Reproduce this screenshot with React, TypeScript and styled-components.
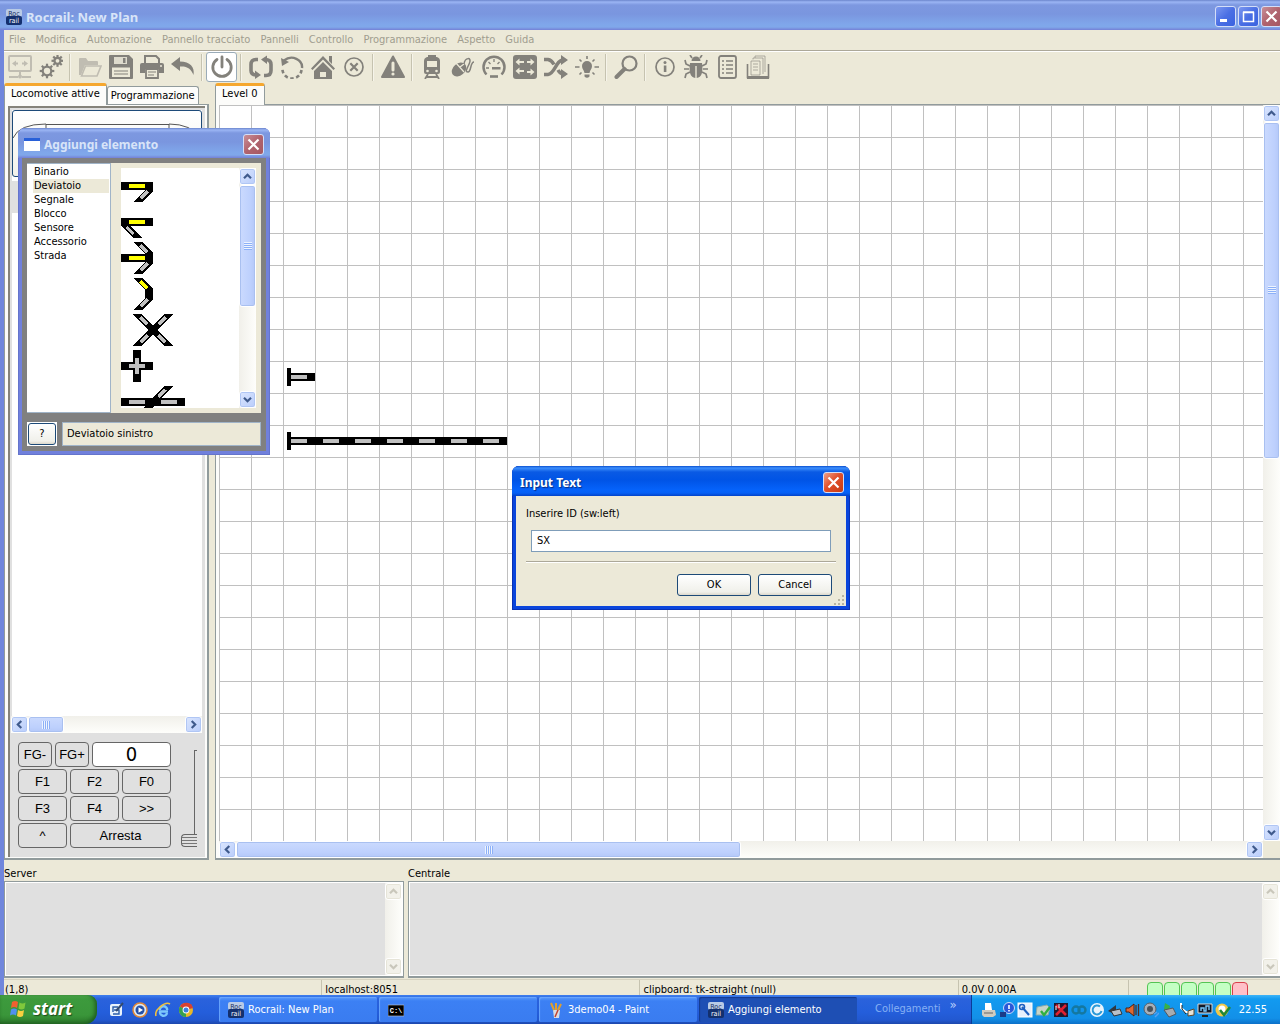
import React, { useState } from "react";
import styled, { createGlobalStyle, css } from "styled-components";

const face = "#ece9d8";
const ui = `"DejaVu Sans Condensed", "Open Sans", sans-serif`;
const caption = `"Noto Sans", "Open Sans", sans-serif`;
const ink = "#83817b";

const Global = createGlobalStyle`
  * { box-sizing: border-box; }
  body { margin: 0; background: ${face}; font: 11px/14px ${ui}; color: #000; }
  button, input, textarea { font: inherit; color: inherit; margin: 0; padding: 0; border-radius: 0; outline: none; }
  button { cursor: default; }
  ul { list-style: none; margin: 0; padding: 0; }
  svg { display: block; flex: none; }
`;

const Screen = styled.div`
  position: relative;
  display: flex;
  flex-direction: column;
  min-height: 100vh;
  overflow: hidden;
`;

/* ---------- window chrome ---------- */
const MainWindow = styled.main`
  flex: 1;
  display: flex;
  flex-direction: column;
  margin-right: -6px;
  background: ${face};
`;

const TitleBar = styled.header<{ $active?: boolean; $round?: boolean }>`
  display: flex;
  align-items: center;
  gap: 2px;
  height: 30px;
  padding: 3px ${(p) => (p.$round ? 6 : 4)}px 0 6px;
  color: ${(p) => (p.$active ? "#fff" : "#d8e4f8")};
  font: bold ${(p) => (p.$round ? 12 : 13)}px/18px ${caption};
  ${(p) => p.$round && "border-radius: 7px 7px 0 0;"}
  background: ${(p) =>
    p.$active
      ? "linear-gradient(#0a50d0 0, #3d8ffc 2px, #0a5ae4 6px, #0054e6 14px, #0563fb 24px, #0660f5 27px, #0343c8 30px)"
      : "linear-gradient(#6c86cc 0, #9bb5f4 2px, #7d98e0 5px, #7a96df 14px, #7fa6ea 24px, #80a8ea 27px, #7480d6 30px)"};
  ${(p) => p.$active && "text-shadow: 1px 1px 1px #0a2d80;"}
`;
const TitleText = styled.h1`
  flex: 1;
  margin: 0 0 0 2px;
  font: inherit;
`;
const CaptionButton = styled.button<{ $tone: string }>`
  display: grid;
  place-items: center;
  width: 21px;
  height: 21px;
  border: 1px solid #d4def8;
  border-radius: 3px;
  background: ${(p) => p.$tone};
`;
const blueTone = "linear-gradient(135deg, #7c98f0, #4a6fe4 50%, #3a63e0)";
const dullRed = "linear-gradient(135deg, #c98f98, #b0636e 50%, #a65862)";
const liveRed = "linear-gradient(135deg, #f0a088, #e0502c 45%, #c83a12)";

const CloseGlyph = () => (
  <svg width="13" height="13" viewBox="0 0 13 13" stroke="#fff" strokeWidth="2.2"><path d="M1.5 1.5l10 10M11.5 1.5l-10 10" /></svg>
);

const Logo = () => (
  <svg width="16" height="16" viewBox="0 0 16 16">
    <rect width="16" height="8" rx="2" fill="#b9cbe6" />
    <rect y="7" width="16" height="9" rx="2" fill="#14306e" />
    <text x="8" y="7" fontSize="7" textAnchor="middle" fill="#1c3160" fontFamily="DejaVu Sans Condensed" fontWeight="normal">Roc</text>
    <text x="8" y="14" fontSize="7" textAnchor="middle" fill="#fff" fontFamily="DejaVu Sans Condensed" fontWeight="normal">rail</text>
  </svg>
);

const WindowBody = styled.div`
  flex: 1;
  display: flex;
  flex-direction: column;
  border-left: 4px solid #7086dc;
`;

const MenuBar = styled.nav`
  display: flex;
  height: 21px;
  padding-left: 1px;
  border-bottom: 1px solid #aca899;
  box-shadow: 0 1px #fff;
`;
const MenuItem = styled.button`
  border: 0;
  background: none;
  padding: 0 5px;
  color: #a09d8f;
  &:first-child { padding-left: 4px; }
`;

const ToolBar = styled.div`
  display: flex;
  align-items: center;
  height: 32px;
`;
const Tool = styled.button<{ $on?: boolean; $faint?: boolean }>`
  display: grid;
  place-items: center;
  width: 31px;
  height: 30px;
  border: 1px solid ${(p) => (p.$on ? "#9aabb8" : "transparent")};
  border-radius: 3px;
  background: ${(p) => (p.$on ? "#fff" : "none")};
  color: ${(p) => (p.$faint ? "#c0bdb2" : ink)};
`;
const Divider = styled.span`
  width: 2px;
  height: 27px;
  margin: 0 3px;
  border-left: 1px solid #c6c3b0;
  border-right: 1px solid #f6f4ea;
`;

/* ---------- toolbar drawings ---------- */
const F = { fill: "currentColor" };
const S = { fill: "none", stroke: "currentColor" };
const gear = (cx: number, cy: number, r: number) => (
  <g>
    <circle cx={cx} cy={cy} r={r} {...S} strokeWidth="2.2" />
    {[0, 45, 90, 135, 180, 225, 270, 315].map((a) => (
      <rect key={a} x={cx - 1.1} y={cy - r - 3} width="2.2" height="2.6" {...F} transform={`rotate(${a} ${cx} ${cy})`} />
    ))}
  </g>
);
const drawings: Record<string, React.ReactNode> = {
  connect: <g><rect x="1" y="1" width="22" height="15" rx="1" {...S} strokeWidth="2" /><path d="M4 8.500l4-3v2h2v2H8v2zM20 8.500l-4-3v2h-2v2h2v2z" {...F} /><path d="M12 16v5M1 22h9M14 22h9" {...S} strokeWidth="2" /><circle cx="12" cy="21.500" r="2" {...F} /></g>,
  gears: <g>{gear(8, 16, 4.3)}{gear(18.500, 5.800, 3)}</g>,
  open: <g><path d="M1 20V4q0-1 1-1h6l2 3h9q1 0 1 1v3H7L3 20z" {...F} /><path d="M7.500 11H23l-4 10H3.500z" fill="#ece9d8" stroke="currentColor" strokeWidth="1.600" /></g>,
  save: <g><path d="M1 0h19l4 4v19q0 1-1 1H1q-1 0-1-1V1q0-1 1-1z" {...F} /><path d="M5 2h13v7H5z" fill="#dedbcd" /><path d="M14 3h2.500v5H14z" {...F} /><path d="M3 12.500h18V22H3z" fill="#ece9d8" /><path d="M5 16h14M5 19h14" stroke="currentColor" strokeWidth="1" /></g>,
  print: <g><path d="M5 8V1h11l3 3v4" {...S} strokeWidth="2" /><path d="M2 8h20q2 0 2 2v8h-5v-4H5v4H0v-8q0-2 2-2z" {...F} /><path d="M6 14h12v9H6z" fill="#ece9d8" stroke="currentColor" strokeWidth="1.800" /><path d="M8 17h8M8 20h6" {...S} /><circle cx="21" cy="11" r="1" fill="#ece9d8" /></g>,
  undo: <path d="M9 2L0 9l9 7v-4.500c7-.5 11 2 13.500 8.500C24 12 19 6.500 9 6.500z" {...F} />,
  power: <g {...S} strokeWidth="2.800" strokeLinecap="round"><path d="M7 4.500a9.200 9.200 0 1 0 10 0" /><path d="M12 2v10" /></g>,
  loop: <g><path d="M9 4.500H7q-5 0-5 5v6q0 4 5 4.500M15 20.500h2q5 0 5-5v-6Q22 5 17 4.500" {...S} strokeWidth="3.600" /><path d="M6 15.500l6 4.500-6 4zM18 .5L12 4.500l6 4.500z" {...F} /></g>,
  rotate: <g><path d="M4 5.500C12-1 23 5 22 13" {...S} strokeWidth="2.400" /><path d="M1 3l1 8 7-4z" {...F} /><path d="M21.500 15a9.500 9.500 0 0 1-19-2" {...S} strokeWidth="2.600" strokeDasharray="3.5 2.6" /></g>,
  home: <g><path d="M0 13.500L12 1l12 12.500-1.500 1.500L12 4.500 1.500 15z" {...F} /><path d="M18 1h3v8l-3-3zM12 7l9 9v8h-6v-7H9v7H3v-8z" {...F} /><path d="M9 23h6" {...S} strokeWidth="2" /></g>,
  cancel: <g {...S} strokeWidth="1.700"><circle cx="12" cy="12" r="9" /><path d="M8.300 8.300l7.400 7.400M15.700 8.300l-7.400 7.400" strokeWidth="2.200" /></g>,
  warn: <g><path d="M12 1.500L23 22H1z" {...F} stroke="currentColor" strokeWidth="2" strokeLinejoin="round" /><path d="M12 8v7" stroke="#ece9d8" strokeWidth="3" strokeLinecap="round" /><circle cx="12" cy="19" r="1.600" fill="#ece9d8" /></g>,
  train: <g><path d="M8 1h8" {...S} strokeWidth="2" /><path d="M7 2h10q3 1 3 4v11q0 2-2 2H6q-2 0-2-2V6q0-3 3-4z" {...F} /><path d="M7 6h10v6H7z" fill="#ece9d8" /><circle cx="7.500" cy="16" r="1.300" fill="#ece9d8" /><circle cx="16.500" cy="16" r="1.300" fill="#ece9d8" /><path d="M8 19l-3 5M16 19l3 5M6 22h12" {...S} strokeWidth="1.800" /></g>,
  mouse: <g><ellipse cx="8" cy="14.500" rx="6" ry="8" transform="rotate(50 8 14.500)" {...F} /><path d="M5 8l8 9M9 12l4-3" stroke="#ece9d8" strokeWidth="1.200" /><path d="M13 9c1-7 8-7 5.500-1s-5 9-1.500 9 2-10 6-10" {...S} strokeWidth="1.500" /></g>,
  gauge: <g><path d="M4.500 19.500a10.500 10.500 0 1 1 15 0" {...S} strokeWidth="2.500" /><path d="M4 13h3M12 4v3M6.500 7l2 2M17.500 7l-2 2" {...S} strokeWidth="1.300" /><path d="M10 12h8.500v2.500H10z" {...F} /><path d="M8 21.500h8" {...S} strokeWidth="2.600" /></g>,
  signals: <g><rect width="24" height="24" rx="3" {...F} /><path d="M2.500 7l4-3.500V6H11v2H6.500v2.500zM21.500 7l-4-3.500V6H14v2h3.500v2.500zM2.500 16l4-3.500V15H11v2H6.500v2.500zM21.500 17l-4-3.500V16H14v2h3.500v2.500z" fill="#ece9d8" /></g>,
  shuffle: <g><path d="M0 4.500h4q3.500.5 6 5M14 15q2 4 6 4M0 19.500h4C11 19 12 5 19 5" {...S} strokeWidth="3.400" /><path d="M17 0l7 5-7 5zM17 14l7 5-7 5z" {...F} /></g>,
  bulb: <g><path d="M12 6a5 5 0 0 0-5 5c0 3 2 4 2.500 7h5c.5-3 2.500-4 2.500-7a5 5 0 0 0-5-5z" {...F} /><path d="M9.500 19.500h5v2q-2.500 2.500-5 0z" {...F} /><path d="M12 1v3M4.500 4.500l2 2M19.500 4.500l-2 2M0 12h4.500M19.500 12H24M4.500 19.500l2-2M19.500 19.500l-2-2" {...S} strokeWidth="1.600" /></g>,
  search: <g><circle cx="15.500" cy="8.500" r="7" {...S} strokeWidth="2.200" /><path d="M10.500 14L2.500 22" {...S} strokeWidth="4" strokeLinecap="round" /></g>,
  info: <g><circle cx="12" cy="12" r="9" {...S} strokeWidth="1.700" /><path d="M10.800 10.500h2.600V17h-2.600z" {...F} /><circle cx="12" cy="7.500" r="1.500" {...F} /></g>,
  bug: <g><path d="M7.500 6a4.500 4.500 0 0 1 9 0z" {...F} /><path d="M6 8h12q2 14-5.300 15V11h-1.400v12Q4 22 6 8z" {...F} /><path d="M8 3L6 0M16 3l2-3M6 11L2 9 1 5M5 14H0M6 17l-4 2-1 4M18 11l4-2 1-4M19 14h5M18 17l4 2 1 4" {...S} strokeWidth="1.700" /></g>,
  list: <g><rect x="4" y="1" width="17" height="22" rx="2" {...S} strokeWidth="1.800" /><path d="M7 6h2M11 6h7M7 10h2M11 10h7M7 14h2M11 14h7M7 18h2M11 18h7" {...S} strokeWidth="1.300" /></g>,
  papers: <g><path d="M9 3V1h10v16M7 4.500V3h10v16" {...S} strokeWidth=".6" /><path d="M5 6h9v14H5zM7 9h5M7 12h5M7 15h5" {...S} strokeWidth=".6" /><path d="M1.500 9v13.500h21V9" {...S} strokeWidth="1.600" /><path d="M1 21h22v3H1z" {...F} /></g>,
};
const Drawing = ({ name }: { name: string }) => (
  <svg width="24" height="24" viewBox="0 0 24 24" aria-hidden="true">{drawings[name]}</svg>
);
const toolGroups = [
  ["connect", "gears"],
  ["open", "save", "print", "undo"],
  ["power"],
  ["loop", "rotate", "home", "cancel"],
  ["warn"],
  ["train", "mouse", "gauge", "signals", "shuffle", "bulb"],
  ["search"],
  ["info", "bug", "list", "papers"],
];

/* ---------- scroll bars ---------- */
const Bar = styled.div<{ $h?: boolean; $off?: boolean }>`
  display: flex;
  flex: none;
  flex-direction: ${(p) => (p.$h ? "row" : "column")};
  ${(p) => (p.$h ? "height: 17px;" : "width: 17px;")}
  background: linear-gradient(${(p) => (p.$h ? "180deg" : "90deg")}, #f1f0ea, #fefefb);
`;
const Arrow = styled.button<{ $off?: boolean }>`
  display: grid;
  place-items: center;
  flex: none;
  width: 17px;
  height: 17px;
  border: 1px solid #fff;
  border-radius: 3px;
  box-shadow: inset 0 0 0 1px ${(p) => (p.$off ? "#e6e4d8" : "#b0c6f4")};
  background: ${(p) => (p.$off ? "#f2f1ea" : "linear-gradient(135deg, #dbe6fe, #b9cdfb)")};
  color: ${(p) => (p.$off ? "#c9c7bb" : "#3f5a8c")};
`;
const Run = styled.div<{ $h?: boolean }>`
  flex: 1;
  display: flex;
  flex-direction: ${(p) => (p.$h ? "row" : "column")};
`;
const Thumb = styled.div<{ $h?: boolean; $size: number }>`
  display: grid;
  place-items: center;
  ${(p) => (p.$h ? `width: ${p.$size}%; height: 17px;` : `height: ${p.$size}%; width: 17px;`)}
  border: 1px solid #fff;
  border-radius: 3px;
  box-shadow: inset 0 0 0 1px #a9c0f0;
  background: linear-gradient(${(p) => (p.$h ? "180deg" : "90deg")}, #cbdafe, #bdd0fd 70%, #b4c8f8);
`;
const Grip = styled.span<{ $h?: boolean }>`
  width: 8px;
  height: 8px;
  background: repeating-linear-gradient(${(p) => (p.$h ? "90deg" : "180deg")}, #eef4fe 0 1px, #8cb0f8 1px 2px);
`;
const turns = { up: 0, right: 90, down: 180, left: 270 };
const Chevron = ({ to }: { to: keyof typeof turns }) => (
  <svg width="9" height="9" viewBox="0 0 9 9"><path d="M1 6.300L4.500 2.800 8 6.300" fill="none" stroke="currentColor" strokeWidth="2.200" transform={`rotate(${turns[to]} 4.500 4.500)`} /></svg>
);
const ScrollBar = ({ h, size = 0, off }: { h?: boolean; size?: number; off?: boolean }) => (
  <Bar $h={h}>
    <Arrow $off={off} aria-label="back"><Chevron to={h ? "left" : "up"} /></Arrow>
    <Run $h={h}>{size > 0 && <Thumb $h={h} $size={size}><Grip $h={h} /></Thumb>}</Run>
    <Arrow $off={off} aria-label="forward"><Chevron to={h ? "right" : "down"} /></Arrow>
  </Bar>
);

/* ---------- notebooks ---------- */
const Workspace = styled.div`
  flex: 1;
  display: flex;
  gap: 6px;
  padding-right: 4px;
`;
const Notebook = styled.section<{ $side?: boolean }>`
  display: flex;
  flex-direction: column;
  ${(p) => (p.$side ? "flex: none; width: 205px;" : "flex: 1; min-width: 0;")}
`;
const Tabs = styled.div`
  display: flex;
  align-items: flex-end;
  height: 21px;
`;
const Tab = styled.button<{ $on?: boolean }>`
  height: ${(p) => (p.$on ? 22 : 18)}px;
  padding: 0 6px;
  border: 1px solid #919b9c;
  border-bottom: 0;
  border-radius: 3px 3px 0 0;
  background: #fcfcfa;
  white-space: nowrap;
  ${(p) => p.$on && css`
    border-top: 3px solid #f5a72e;
    margin-bottom: -1px;
    padding-bottom: 3px;
    z-index: 1;
  `}
  & + & { padding: 0 3px; }
`;
const Page = styled.div`
  flex: 1;
  display: flex;
  flex-direction: column;
  padding: 1px 2px 1px 3px;
  border: 1px solid #919b9c;
  border-width: 1px 2px 2px 1px;
  background: #fcfcfa;
`;
const LocoPanel = styled.div`
  flex: 1;
  display: flex;
  flex-direction: column;
  border: 2px solid #85837a;
  border-right: 0;
  border-bottom: 0;
  background: #e0e0e0;
`;
const LocoList = styled.div`
  flex: 1;
  display: flex;
  flex-direction: column;
  gap: 4px;
  margin: 2px 3px 0 2px;
  background: #fff;
`;
const LocoPicture = styled.button`
  height: 67px;
  border: 1px solid #1d4a78;
  border-radius: 3px;
  background: linear-gradient(#fff, #f2f1ea);
  overflow: hidden;
  text-align: left;
`;
const LocoRow = styled.div`
  height: 32px;
  padding: 8px 4px;
  background: #e0e0e0;
`;
const BarSlot = styled.div`
  margin: 0 3px 0 1px;
`;
const Throttle = styled.div`
  display: flex;
  justify-content: space-between;
  padding: 9px 8px 9px 8px;
`;
const Keys = styled.div`
  display: flex;
  flex-direction: column;
  gap: 2px;
  width: 153px;
`;
const KeyRow = styled.div`
  display: flex;
  gap: 3px;
`;
const Key = styled.button<{ $w?: number }>`
  ${(p) => (p.$w ? `width: ${p.$w}px;` : "flex: 1;")}
  height: 25px;
  border: 1px solid #666;
  border-radius: 4px;
  background: #e0e0e0;
  font: 13px/20px "Liberation Sans", sans-serif;
`;
const Speed = styled.output`
  flex: 1;
  height: 25px;
  border: 1px solid #666;
  border-radius: 4px;
  background: #fff;
  text-align: center;
  font: 20px/23px ${ui};
`;
const Slider = styled.input`
  appearance: none;
  writing-mode: vertical-lr;
  direction: rtl;
  width: 16px;
  height: 97px;
  margin: 8px 0 0 0;
  background:
    linear-gradient(#666, #666) 13px 0 / 1px 100% no-repeat,
    linear-gradient(#666, #666) 13px 0 / 3px 1px no-repeat;
  &::-webkit-slider-thumb {
    appearance: none;
    width: 16px;
    height: 13px;
    border: 1px solid #666;
    border-right: 0;
    border-radius: 4px 0 0 4px;
    background: repeating-linear-gradient(#e0e0e0 0 2px, #777 2px 3px);
  }
`;

const PlanPage = styled(Page)`
  padding: 0 0 0 3px;
`;
const PlanRow = styled.div`
  flex: 1;
  display: flex;
`;
const Plan = styled.div`
  position: relative;
  flex: 1;
  background:
    linear-gradient(90deg, #c0c0c0 1px, transparent 1px) 0 0 / 32px 32px,
    linear-gradient(#c0c0c0 1px, transparent 1px) 0 0 / 32px 32px,
    #fff;
`;
const Placed = styled.div<{ $col: number; $row: number }>`
  position: absolute;
  left: ${(p) => p.$col * 32}px;
  top: ${(p) => p.$row * 32}px;
`;
const PlanFoot = styled.div`
  display: flex;
  padding-right: 17px;
  background: ${face};
  & > * { flex: 1; }
`;

const TrackLine = ({ cells }: { cells: number }) => (
  <svg width={cells * 32} height="32" viewBox={`0 0 ${cells * 32} 32`}>
    <path d={`M4 7h4v18H4zM8 12h${cells * 32 - 8}v8H8z`} />
    {Array.from({ length: cells }, (_, i) => (
      <rect key={i} x={8 + i * 32} y="14" width="16" height="4" fill="#c0c0c0" />
    ))}
  </svg>
);

/* ---------- logs and status ---------- */
const Logs = styled.div`
  display: flex;
  gap: 4px;
  padding: 7px 5px 1px 0;
`;
const Log = styled.label<{ $side?: boolean }>`
  display: flex;
  flex-direction: column;
  ${(p) => (p.$side ? "flex: none; width: 400px;" : "flex: 1;")}
`;
const LogBox = styled.span`
  display: flex;
  height: 97px;
  border: 1px solid #919b9c;
  border-width: 1px 1px 2px 1px;
  box-shadow: inset 0 0 0 1px #fff;
  padding: 1px;
`;
const LogText = styled.textarea`
  flex: 1;
  min-width: 0;
  border: 0;
  resize: none;
  background: #e0e0e0;
`;
const StatusBar = styled.footer`
  display: grid;
  grid-template-columns: 317fr 318fr 318fr 170fr 158fr;
  height: 16px;
  overflow: hidden;
  border-top: 1px solid #d6d2c0;
`;
const StatusCell = styled.span`
  height: 16px;
  padding: 3px 0 0 3px;
  white-space: nowrap;
  &:first-child { padding-left: 1px; }
  & + & { border-left: 1px solid #c6c3b0; }
`;
const Leds = styled(StatusCell)`
  display: flex;
  gap: 1px;
  padding: 2px 0 0 18px;
`;
const Led = styled.i<{ $bad?: boolean }>`
  width: 16px;
  height: 18px;
  border: 1px solid ${(p) => (p.$bad ? "#d8404c" : "#54c454")};
  border-radius: 4px;
  background: ${(p) => (p.$bad ? "#ffc0c8" : "#c4ffc4")};
`;

/* ---------- floating windows ---------- */
const Floating = styled.section<{ $x: number; $y: number; $w: number; $active?: boolean }>`
  position: absolute;
  left: ${(p) => p.$x}px;
  top: ${(p) => p.$y}px;
  width: ${(p) => p.$w}px;
  border-radius: 7px 7px 0 0;
  background: ${(p) => (p.$active ? "#0a45dc" : "#7080dc")};
  box-shadow: inset 0 0 0 1px ${(p) => (p.$active ? "#0831b4" : "#6474cc")};
  padding-bottom: 4px;
`;
const PaletteBody = styled.div`
  margin: 0 4px;
  padding: 5px;
  background: #808080;
`;
const PaletteTop = styled.div`
  display: flex;
  height: 250px;
`;
const KindList = styled.ul`
  width: 84px;
  padding: 1px 1px 0 6px;
  border: 1px solid #a0b4c8;
  border-left: 0;
  background: #fff;
`;
const Kind = styled.li<{ $on?: boolean }>`
  height: 14px;
  padding-left: 1px;
  background: ${(p) => (p.$on ? face : "none")};
`;
const SymbolPane = styled.div`
  flex: 1;
  display: flex;
  padding: 5px 5px 5px 10px;
  background: ${face};
`;
const SymbolList = styled.ul`
  flex: 1;
  overflow: hidden;
  background: #fff;
`;
const SymbolItem = styled.li`
  height: 36px;
  padding-top: 2px;
`;
const PaletteFoot = styled.div`
  display: flex;
  gap: 5px;
  padding-top: 9px;
`;
const PushButton = styled.button<{ $w: number }>`
  width: ${(p) => p.$w}px;
  height: 22px;
  border: 1px solid #1d4a78;
  border-radius: 3px;
  background: linear-gradient(#fff, #f0f0ea 85%, #dcd8cc);
`;
const HelpFrame = styled.span`
  padding: 1px;
  background: #fff;
`;
const Caption = styled.output`
  flex: 1;
  padding: 4px;
  border: 1px solid #a0b4c8;
  background: ${face};
`;

const PromptBody = styled.form`
  display: flex;
  flex-direction: column;
  margin: 0 4px;
  padding: 11px 10px 10px 10px;
  background: ${face};
`;
const PromptInput = styled.input`
  height: 22px;
  margin: 9px 5px 9px 5px;
  padding: 0 5px 2px 5px;
  border: 1px solid #7f9db9;
  background: #fff;
`;
const Rule = styled.hr`
  width: 100%;
  margin: 0;
  border: 0;
  border-top: 1px solid #aca899;
  border-bottom: 1px solid #fff;
`;
const Buttons = styled.div`
  display: flex;
  justify-content: flex-end;
  gap: 7px;
  padding: 11px 4px 0 0;
`;
const ResizeGrip = styled.svg`
  position: absolute;
  right: 5px;
  bottom: 4px;
`;

const grey = "#c0c0c0";
const Core = ({ d, tone = grey }: { d: string; tone?: string }) => <path d={d} fill="none" stroke={tone} strokeWidth="3.4" />;
const Straight = ({ fill = "#ff0" }) => (
  <g><path d="M0 12h32v8H0z" /><path d="M8 14h16v4H8z" fill={fill} /></g>
);
const DownLeft = () => <g><path d="M12 32h9l11-11v-9h-8v8z" /><Core d="M19.500 28.500l7-7" /></g>;
const UpLeft = ({ tone = grey }) => <g><path d="M12 0h9l11 11v9h-8v-8z" /><Core d="M19.500 3.500l7 7" tone={tone} /></g>;
const symbols = [
  <g><DownLeft /><Straight /></g>,
  <g><path d="M0 12v8l12 12h9L8 19v-7z" /><Core d="M12.500 28l-7-7" /><Straight /></g>,
  <g><DownLeft /><UpLeft /><Straight /></g>,
  <g><DownLeft /><UpLeft tone="#ff0" /></g>,
  <g><path d="M12 0h9l31 32h-9z" /><path d="M52 0h-9L12 32h9z" /><Core d="M19.500 3.500l7 7M44.500 3.500l-7 7M19.500 28.500l7-7M44.500 28.500l-7-7" /></g>,
  <g><path d="M0 12h32v8H0z" /><path d="M12 0h8v32h-8z" /><path d="M8 14h16v4H8z" fill={grey} /><path d="M14 8h4v16h-4z" fill={grey} /></g>,
  <g><path d="M0 12h64v8H0z" /><path d="M52 0h-9L22 23h9z" /><path d="M8 14h16v4H8zM40 14h16v4H40z" fill={grey} /><Core d="M44.500 3.500l-7 7.500" /></g>,
];

/* ---------- task bar ---------- */
const TaskBar = styled.footer`
  display: flex;
  height: 29px;
  background: linear-gradient(#3f80ee 0, #2a62dc 4px, #245edb 60%, #2258d0 25px, #1c47ac);
  color: #fff;
  position: relative;
`;
const Start = styled.button`
  display: flex;
  align-items: center;
  gap: 4px;
  width: 97px;
  padding: 0 0 1px 9px;
  border: 0;
  border-radius: 0 9px 12px 0;
  background: linear-gradient(#4fae4c 0, #3d9a3d 4px, #3a963a 20px, #2c7a2c);
  box-shadow: inset -2px -1px 4px #1d5a1e;
  font: italic bold 17px/24px ${caption};
  text-shadow: 1px 1px 1px #1c4a1c;
`;
const QuickLaunch = styled.div`
  display: flex;
  align-items: center;
  gap: 7px;
  width: 122px;
  padding-left: 12px;
`;
const Tasks = styled.div`
  flex: 1;
  display: flex;
  gap: 2px;
  padding: 2px 0;
`;
const Task = styled.button<{ $on?: boolean }>`
  display: flex;
  align-items: center;
  gap: 4px;
  flex: 0 1 158px;
  padding: 0 9px;
  border: 0;
  border-radius: 2px;
  background: ${(p) => (p.$on ? "#1e4fb4" : "linear-gradient(#5a9afc, #3c80f4 4px, #3a7cf0)")};
  box-shadow: inset 1px 1px 1px ${(p) => (p.$on ? "#143a90" : "#6aa6fc")};
  white-space: nowrap;
`;
const Links = styled.div`
  display: flex;
  gap: 9px;
  padding: 7px 14px 0 0;
  color: #86b0f4;
`;
const More = styled.span`
  line-height: 6px;
  font-size: 13px;
  color: #b8d0fc;
`;
const Tray = styled.div`
  display: flex;
  align-items: center;
  gap: 2px;
  padding: 0 13px 0 9px;
  border-left: 1px solid #0a3c98;
  background: linear-gradient(#3cb4f8 0, #129af0 4px, #1290e8 80%, #0c70c8);
`;
const Clock = styled.time`
  padding-left: 6px;
`;
const Mini = ({ children }: { children: React.ReactNode }) => (
  <svg width="16" height="16" viewBox="0 0 16 16">{children}</svg>
);
const quick = [
  <g><rect x="1" y="2" width="12" height="12" rx="2" fill="#e8f2fc" /><path d="M4 10V5h5M5 8h5v4H4" fill="none" stroke="#2a5ca8" strokeWidth="1.400" /><path d="M7 9l7-8" stroke="#324a70" strokeWidth="2" /></g>,
  <g><circle cx="8" cy="8" r="7" fill="#dce8f4" stroke="#e08838" strokeWidth="1.500" /><circle cx="8" cy="8" r="4.500" fill="#2450a8" /><path d="M6.500 5.200L11 8l-4.500 2.800z" fill="#fff" /></g>,
  <g><path d="M13 9.500H5a3.500 3.500 0 0 0 7 1.500M4.800 8a3.700 3.700 0 0 1 7.400 0" fill="none" stroke="#7cc8fc" strokeWidth="2.400" /><path d="M1 14C-1 8 10-1 15 2" fill="none" stroke="#f0c040" strokeWidth="1.600" /></g>,
  <g><circle cx="8" cy="8" r="7" fill="#e8b828" /><path d="M8 8L2 4.400A7 7 0 0 1 15 6z" fill="#d84030" /><path d="M8 8l0 7A7 7 0 0 1 2 4.400z" fill="#38a050" /><circle cx="8" cy="8" r="3.400" fill="#fff" /><circle cx="8" cy="8" r="2.500" fill="#3c80e0" /></g>,
];
const tray = [
  <g><path d="M4 8V1h6l1 7z" fill="#fff" /><path d="M1 8h13l1 5-3 2H3l-2-2z" fill="#d0ccc0" /><path d="M3 11h9" stroke="#666" /></g>,
  <g><circle cx="10" cy="6" r="5.500" fill="#2a58d8" stroke="#c8dcfc" /><path d="M10 3v4M10 8v1.500" stroke="#fff" strokeWidth="1.600" /><path d="M1 10h6v5H1z" fill="#1a3c88" /></g>,
  <g><rect x="1" y="1" width="14" height="14" fill="#e8f0fc" stroke="#fff" /><path d="M5 5l7 8" stroke="#1e60c0" strokeWidth="2" /><circle cx="5" cy="5" r="2.500" fill="none" stroke="#1e60c0" strokeWidth="1.600" /></g>,
  <g><path d="M2 5l10-2 3 3-2 7H1z" fill="#c8d4c8" stroke="#8aa" /><path d="M6 9l3 4 6-8" fill="none" stroke="#30b040" strokeWidth="2.400" /></g>,
  <g><path d="M1 1h14v14H1z" fill="#201830" /><path d="M3 3l10 10M13 3L3 13" stroke="#e02030" strokeWidth="2.600" /><path d="M3 4v4M6 2v4" stroke="#fff" /></g>,
  <g fill="none" stroke="#1478a0" strokeWidth="2.400"><circle cx="5" cy="8" r="3.500" /><circle cx="11" cy="8" r="3.500" /></g>,
  <g><circle cx="8" cy="8" r="7" fill="#e8f4fc" /><path d="M11 4.500A4.500 4.500 0 1 0 12.500 9" fill="none" stroke="#2a9ad8" strokeWidth="2" /></g>,
  <g><path d="M1 9l8-6v10z" fill="#303840" /><path d="M4 9l9-2 2 5-8 2z" fill="#b8c0c8" stroke="#333" /></g>,
  <g><path d="M1 6h3l5-4v12l-5-4H1z" fill="#e06830" stroke="#502010" /><path d="M11 3v10M13.500 2v12" stroke="#503028" strokeWidth="1.300" /></g>,
  <g><circle cx="7" cy="7" r="6" fill="#a8b0b8" stroke="#586068" /><circle cx="7" cy="7" r="3" fill="#485058" /><path d="M11 12l3-2M12 15l4-4" stroke="#58a0f0" strokeWidth="1.500" /></g>,
  <g><path d="M4 1l5 3-1 5-5-2z" fill="#38b048" /><path d="M3 8l9-2 3 6-7 3z" fill="#a8acb0" stroke="#505860" /></g>,
  <g><path d="M2 1v5l5 4h4" fill="none" stroke="#fff" strokeWidth="2" /><path d="M9 9l6-2v6l-6 1z" fill="#e8e4d8" stroke="#604828" /><path d="M3 3v4l4 5" fill="none" stroke="#222" /></g>,
  <g><path d="M1 2h14v9H1z" fill="#101828" stroke="#d8d8d8" /><path d="M4 9V6h3v3h2V4h3v4" fill="none" stroke="#78c8fc" strokeWidth="1.400" /><path d="M5 14h6" stroke="#222" strokeWidth="2" /></g>,
  <g><circle cx="7" cy="8" r="6.500" fill="#f0c848" /><circle cx="7" cy="7" r="3.500" fill="#fff" /><path d="M5 8l4 5 6-8" fill="none" stroke="#208838" strokeWidth="2.600" /></g>,
];

const menus = ["File", "Modifica", "Automazione", "Pannello tracciato", "Pannelli", "Controllo", "Programmazione", "Aspetto", "Guida"];
const kinds = ["Binario", "Deviatoio", "Segnale", "Blocco", "Sensore", "Accessorio", "Strada"];

export default function App() {
  const [id, setId] = useState("SX");
  return (
    <Screen>
      <Global />
      <MainWindow>
        <TitleBar>
          <Logo />
          <TitleText>Rocrail: New Plan</TitleText>
          <CaptionButton $tone={blueTone} aria-label="Minimize"><svg width="13" height="13"><path d="M1 9h7v3H1z" fill="#fff" /></svg></CaptionButton>
          <CaptionButton $tone={blueTone} aria-label="Maximize"><svg width="13" height="13"><path d="M1.500 2.500h10v9h-10zM1 2h11" fill="none" stroke="#fff" strokeWidth="1.500" /></svg></CaptionButton>
          <CaptionButton $tone={dullRed} aria-label="Close"><CloseGlyph /></CaptionButton>
        </TitleBar>
        <WindowBody>
          <MenuBar>{menus.map((m) => <MenuItem key={m}>{m}</MenuItem>)}</MenuBar>
          <ToolBar>
            {toolGroups.map((group, i) => (
              <React.Fragment key={i}>
                {i > 0 && <Divider />}
                {group.map((n) => (
                  <Tool key={n} aria-label={n} $on={n === "power"} $faint={n === "connect" || n === "open"}><Drawing name={n} /></Tool>
                ))}
              </React.Fragment>
            ))}
          </ToolBar>
          <Workspace>
            <Notebook $side>
              <Tabs><Tab $on>Locomotive attive</Tab><Tab>Programmazione</Tab></Tabs>
              <Page>
                <LocoPanel>
                  <LocoList>
                    <LocoPicture aria-label="Locomotive">
                      <svg width="188" height="64" viewBox="0 0 188 64" fill="none" stroke="#555"><path d="M0 26Q6 12 33 12v6M33 12.500h123M156 18v-6q22 0 32 14" /></svg>
                    </LocoPicture>
                    <LocoRow />
                  </LocoList>
                  <BarSlot><ScrollBar h size={23} /></BarSlot>
                  <Throttle>
                    <Keys>
                      <KeyRow><Key $w={34}>FG-</Key><Key $w={34}>FG+</Key><Speed>0</Speed></KeyRow>
                      <KeyRow><Key>F1</Key><Key>F2</Key><Key>F0</Key></KeyRow>
                      <KeyRow><Key>F3</Key><Key>F4</Key><Key>&gt;&gt;</Key></KeyRow>
                      <KeyRow><Key $w={49}>^</Key><Key>Arresta</Key></KeyRow>
                    </Keys>
                    <Slider type="range" min="0" max="100" defaultValue="0" aria-label="Speed" />
                  </Throttle>
                </LocoPanel>
              </Page>
            </Notebook>
            <Notebook>
              <Tabs><Tab $on>Level 0</Tab></Tabs>
              <PlanPage>
                <PlanRow>
                  <Plan>
                    <Placed $col={2} $row={8}><TrackLine cells={1} /></Placed>
                    <Placed $col={2} $row={10}><TrackLine cells={7} /></Placed>
                  </Plan>
                  <ScrollBar size={48} />
                </PlanRow>
                <PlanFoot><ScrollBar h size={50} /></PlanFoot>
              </PlanPage>
            </Notebook>
          </Workspace>
          <Logs>
            <Log $side>Server<LogBox><LogText readOnly /><ScrollBar off /></LogBox></Log>
            <Log>Centrale<LogBox><LogText readOnly /><ScrollBar off /></LogBox></Log>
          </Logs>
          <StatusBar>
            <StatusCell>(1,8)</StatusCell>
            <StatusCell>localhost:8051</StatusCell>
            <StatusCell>clipboard: tk-straight (null)</StatusCell>
            <StatusCell>0.0V 0.00A</StatusCell>
            <Leds><Led /><Led /><Led /><Led /><Led /><Led $bad /></Leds>
          </StatusBar>
        </WindowBody>
      </MainWindow>

      <Floating $x={18} $y={128} $w={252}>
        <TitleBar $round>
          <svg width="16" height="14"><path d="M0 0h16v13H0z" fill="#fff" /><path d="M0 0h16v3H0z" fill="#2860d8" /></svg>
          <TitleText>Aggiungi elemento</TitleText>
          <CaptionButton $tone={dullRed} aria-label="Close"><CloseGlyph /></CaptionButton>
        </TitleBar>
        <PaletteBody>
          <PaletteTop>
            <KindList>{kinds.map((k) => <Kind key={k} $on={k === "Deviatoio"}>{k}</Kind>)}</KindList>
            <SymbolPane>
              <SymbolList>
                {symbols.map((s, i) => (
                  <SymbolItem key={i}><svg width="64" height="32" viewBox="0 0 64 32" shapeRendering="crispEdges">{s}</svg></SymbolItem>
                ))}
              </SymbolList>
              <ScrollBar size={59} />
            </SymbolPane>
          </PaletteTop>
          <PaletteFoot>
            <HelpFrame><PushButton $w={28}>?</PushButton></HelpFrame>
            <Caption>Deviatoio sinistro</Caption>
          </PaletteFoot>
        </PaletteBody>
      </Floating>

      <Floating $x={512} $y={466} $w={338} $active>
        <TitleBar $round $active>
          <TitleText>Input Text</TitleText>
          <CaptionButton $tone={liveRed} aria-label="Close"><CloseGlyph /></CaptionButton>
        </TitleBar>
        <PromptBody onSubmit={(e) => e.preventDefault()}>
          <label htmlFor="element-id">Inserire ID (sw:left)</label>
          <PromptInput id="element-id" value={id} onChange={(e) => setId(e.target.value)} />
          <Rule />
          <Buttons><PushButton $w={74}>OK</PushButton><PushButton $w={74} type="button">Cancel</PushButton></Buttons>
        </PromptBody>
        <ResizeGrip width="12" height="12" fill="#b8b4a2"><path d="M9 1h2v2H9zM5 5h2v2H5zM9 5h2v2H9zM1 9h2v2H1zM5 9h2v2H5zM9 9h2v2H9z" /></ResizeGrip>
      </Floating>

      <TaskBar>
        <Start>
          <svg width="20" height="18" viewBox="0 0 20 18"><path d="M3 2q3-2 6 0L8 8Q5 6 2 8z" fill="#f06030" /><path d="M10.500 2.500q3 2 6 0l-1 6q-3 2-6 0z" fill="#80c83c" /><path d="M2 9.500q3-2 6 0l-1 6q-3-2-6 0z" fill="#5090f0" /><path d="M9 10q3 2 6 0l-1 6q-3 2-6 0z" fill="#f8d040" /></svg>
          start
        </Start>
        <QuickLaunch>{quick.map((q, i) => <Mini key={i}>{q}</Mini>)}</QuickLaunch>
        <Tasks>
          <Task><Logo />Rocrail: New Plan</Task>
          <Task aria-label="Command prompt"><Mini><path d="M0 3h16v11H0z" fill="#000" stroke="#c8c8c8" strokeWidth=".6" /><text x="8" y="11" fontSize="7" fontWeight="bold" fill="#fff" textAnchor="middle" fontFamily="Liberation Mono">C:\</text></Mini></Task>
          <Task><Mini><path d="M5 8h7l-1 8H6z" fill="#d8dce4" /><path d="M6 8L3 1M8 8V1M10 8l3-6" stroke="#e0a030" strokeWidth="2" /><path d="M7 15l3-7" stroke="#c04030" strokeWidth="1.500" /></Mini>3demo04 - Paint</Task>
          <Task $on><Logo />Aggiungi elemento</Task>
        </Tasks>
        <Links>Collegamenti<More>»</More></Links>
        <Tray>
          {tray.map((t, i) => <Mini key={i}>{t}</Mini>)}
          <Clock>22.55</Clock>
        </Tray>
      </TaskBar>
    </Screen>
  );
}
